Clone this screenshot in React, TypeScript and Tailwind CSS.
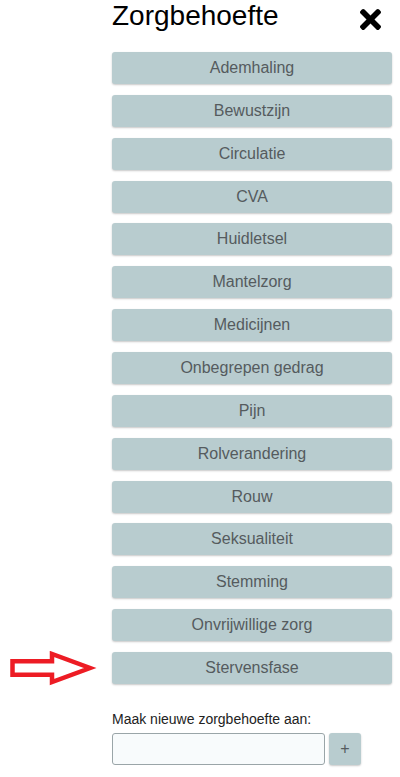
const items = [
  "Ademhaling",
  "Bewustzijn",
  "Circulatie",
  "CVA",
  "Huidletsel",
  "Mantelzorg",
  "Medicijnen",
  "Onbegrepen gedrag",
  "Pijn",
  "Rolverandering",
  "Rouw",
  "Seksualiteit",
  "Stemming",
  "Onvrijwillige zorg",
  "Stervensfase",
];

const CloseIcon = () => (
  <svg width="21" height="21" viewBox="0 80 352 352" aria-hidden>
    <path
      fill="#000"
      d="M242.72 256l100.07-100.07c12.28-12.28 12.28-32.19 0-44.48l-22.24-22.24c-12.28-12.28-32.19-12.28-44.48 0L176 189.28 75.93 89.21c-12.28-12.28-32.19-12.28-44.48 0L9.21 111.45c-12.28 12.28-12.28 32.19 0 44.48L109.28 256 9.21 356.07c-12.28 12.28-12.28 32.19 0 44.48l22.24 22.24c12.28 12.28 32.2 12.28 44.48 0L176 322.72l100.07 100.07c12.28 12.28 32.2 12.28 44.48 0l22.24-22.24c12.28-12.28 12.28-32.19 0-44.48L242.72 256z"
    />
  </svg>
);

// red hand-drawn pointer next to the last item
const Arrow = () => (
  <svg width="90" height="36" viewBox="0 0 90 36" aria-hidden>
    <path
      d="M4.5 10.25 H44 V3 L82 17 L44 31 V23.75 H4.5 Z"
      fill="none"
      stroke="#ed1c24"
      strokeWidth="4.5"
      strokeLinejoin="miter"
    />
  </svg>
);

export default function App() {
  return (
    <div className="min-h-[777px] w-[400px] bg-white font-['Liberation_Sans',Arial,sans-serif]">
      <div className="ml-[112px] w-[280px]">
        <div className="flex h-[32px] items-center justify-between">
          <h1 className="text-[28px] leading-[32px] text-black">Zorgbehoefte</h1>
          <div className="mr-[11px] mt-[6px]">
            <CloseIcon />
          </div>
        </div>

        <div className="mt-[20px] flex flex-col gap-[10.86px]">
          {items.map((item) => (
            <div key={item} className="relative">
              <button className="flex h-[32px] w-full items-center justify-center rounded-[3px] bg-[#b8cccf] text-[16px] text-[#555b5e] shadow-[0_1px_2px_rgba(0,0,0,0.22)]">
                {item}
              </button>
              {item === "Stervensfase" && (
                <div className="absolute left-[-104px] top-[-1px]">
                  <Arrow />
                </div>
              )}
            </div>
          ))}
        </div>

        <div className="mt-[27px] text-[14px] leading-[16px] text-[#222]">
          Maak nieuwe zorgbehoefte aan:
        </div>
        <div className="mt-[6px] flex gap-[4px]">
          <input
            type="text"
            className="h-[32px] w-[213px] rounded-[3px] border border-[#9aa5a8] bg-[#f8fbfc] px-2 text-[14px] outline-none"
          />
          <button className="flex h-[32px] w-[32px] items-center justify-center rounded-[3px] bg-[#b8cccf] text-[16px] text-[#555b5e] shadow-[0_1px_2px_rgba(0,0,0,0.22)]">
            +
          </button>
        </div>
      </div>
    </div>
  );
}
